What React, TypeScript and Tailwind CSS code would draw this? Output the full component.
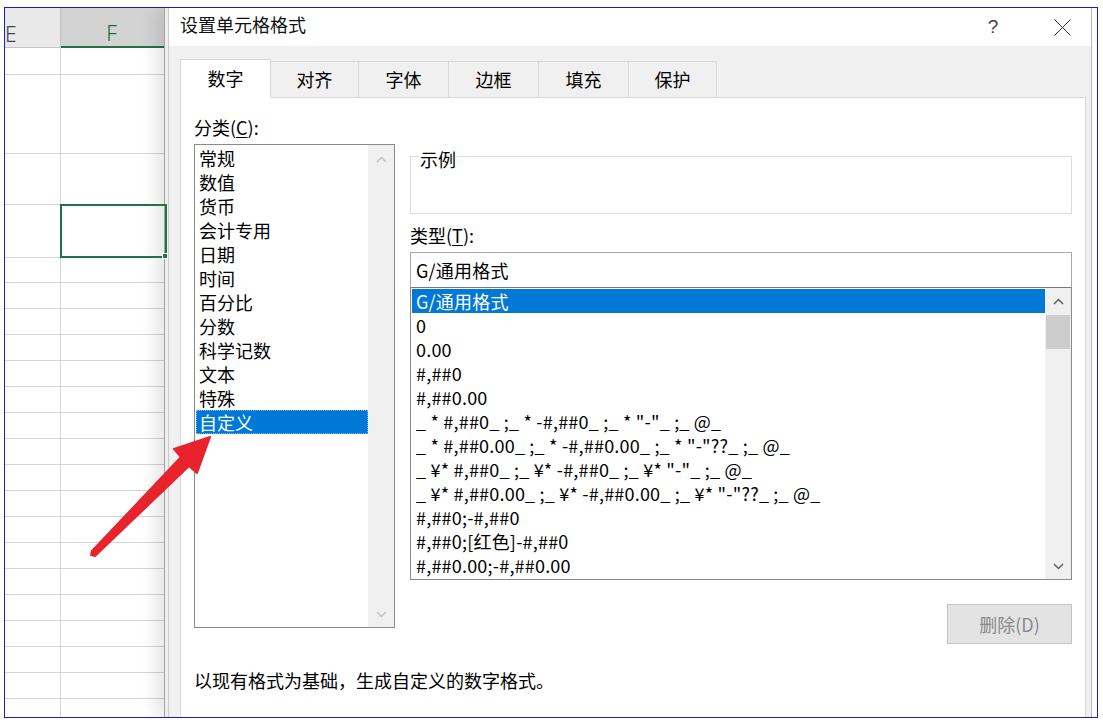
import React from 'react';

const categories = ['常规', '数值', '货币', '会计专用', '日期', '时间', '百分比', '分数', '科学记数', '文本', '特殊', '自定义'];

const formats = [
  'G/通用格式',
  '0',
  '0.00',
  '#,##0',
  '#,##0.00',
  '_ * #,##0_ ;_ * -#,##0_ ;_ * "-"_ ;_ @_ ',
  '_ * #,##0.00_ ;_ * -#,##0.00_ ;_ * "-"??_ ;_ @_ ',
  '_ ¥* #,##0_ ;_ ¥* -#,##0_ ;_ ¥* "-"_ ;_ @_ ',
  '_ ¥* #,##0.00_ ;_ ¥* -#,##0.00_ ;_ ¥* "-"??_ ;_ @_ ',
  '#,##0;-#,##0',
  '#,##0;[红色]-#,##0',
  '#,##0.00;-#,##0.00',
];

// row heights of the sheet behind the dialog (px, incl. bottom line)
const rowHeights = [27, 79, 51, 53, 25, 26, 26, 26, 26, 26, 26, 26, 26, 26, 26, 26, 26, 26, 26, 26, 26, 26];

const tabs = [
  { label: '对齐', w: 'w-[88px]' },
  { label: '字体', w: 'w-[90px]' },
  { label: '边框', w: 'w-[90px]' },
  { label: '填充', w: 'w-[90px]' },
  { label: '保护', w: 'w-[88px]' },
];

const Chevron: React.FC<{ up?: boolean; color: string }> = ({ up, color }) => (
  <svg width="11" height="7" viewBox="0 0 11 7">
    <polyline
      points={up ? '1,6 5.5,1.5 10,6' : '1,1 5.5,5.5 10,1'}
      fill="none"
      stroke={color}
      strokeWidth="1.5"
    />
  </svg>
);

const Sheet: React.FC = () => (
  <div className="w-[159px] shrink-0 flex flex-col bg-white">
    <div className="flex h-[40px] shrink-0 font-['Noto_Sans',sans-serif] font-light text-[21px] leading-[24px]">
      <div className="w-[56px] bg-[#e9e9e9] border-b border-r border-[#c4c4c4] flex items-end pb-[1px] text-[#444]">
        <span>E</span>
      </div>
      <div className="flex-1 bg-[#d3d3d3] border-b-2 border-[#217346] flex items-end justify-center pb-[1px] pr-[2px] text-[#2a6640]">
        F
      </div>
    </div>
    {rowHeights.map((h, i) => (
      <div key={i} className="flex shrink-0 border-b border-[#d4d4d4]" style={{ height: h }}>
        <div className="w-[56px] border-r border-[#d4d4d4]" />
        <div className="flex-1 relative">
          {i === 3 && (
            <div className="absolute -top-[1px] -left-[1px] -right-[3px] -bottom-[1px] border-2 border-[#217346] z-20">
              <div className="absolute -right-[3px] -bottom-[3px] w-[6px] h-[6px] bg-[#217346] border border-white" />
            </div>
          )}
        </div>
      </div>
    ))}
  </div>
);

const Dialog: React.FC = () => (
  <div className="flex shrink-0 relative z-10 shadow-[-10px_0_14px_rgba(0,0,0,0.09)]">
    <div className="w-px bg-[#a3a3a3]" />
    <div className="w-[3px] bg-[#efefef]" />
    <div className="w-px bg-[#cacaca]" />
    <div className="w-[923px] flex flex-col border-r border-[#b8b8b8] text-black">
      <div className="h-[38px] shrink-0 bg-white flex items-start pl-[11px] pt-[4px]">
        <span className="text-[18px] leading-[24px] text-[#111]">设置单元格格式</span>
        <div className="ml-auto flex items-start">
          <div className="w-[46px] h-[30px] flex items-center justify-center text-[19px] text-[#444] font-['Liberation_Sans',sans-serif]">
            ?
          </div>
          <div className="w-[23px]" />
          <div className="w-[46px] h-[30px] flex items-center justify-center mr-[6px]">
            <svg width="17" height="17" viewBox="0 0 17 17">
              <line x1="0.5" y1="0.5" x2="16.5" y2="16.5" stroke="#333" strokeWidth="1" />
              <line x1="16.5" y1="0.5" x2="0.5" y2="16.5" stroke="#333" strokeWidth="1" />
            </svg>
          </div>
        </div>
      </div>

      <div className="flex-1 bg-[#f0f0f0] pl-[11px] pr-[5px] pt-[13px] flex flex-col">
        <div className="flex items-end h-[38px] shrink-0 text-[18px]">
          <div className="h-[39px] w-[91px] -mb-px relative z-10 bg-white border border-b-0 border-[#d9d9d9] flex items-center justify-center pb-px">
            数字
          </div>
          {tabs.map((t) => (
            <div
              key={t.label}
              className={`h-[36px] ${t.w} border-t border-r border-[#d9d9d9] flex items-center justify-center`}
            >
              {t.label}
            </div>
          ))}
        </div>

        <div className="flex-1 bg-white border border-b-0 border-[#d9d9d9] px-[13px] pt-[17px] text-[18px]">
          <div className="flex gap-[15px]">
            <div className="w-[201px] shrink-0 flex flex-col">
              <div className="h-[24px] leading-[24px]">
                分类(<span className="underline underline-offset-2">C</span>):
              </div>
              <div className="mt-[5px] h-[484px] border border-[#8a8a8a] flex">
                <div className="flex-1 pl-px pt-px">
                  {categories.map((c, i) => (
                    <div
                      key={c}
                      className={
                        i === 11
                          ? 'h-[24px] leading-[24px] pl-[3px] bg-[#0078d7] text-white outline outline-1 outline-dotted outline-[#7fb5e6] -outline-offset-1'
                          : 'h-[24px] leading-[24px] pl-[3px]'
                      }
                    >
                      {c}
                    </div>
                  ))}
                </div>
                <div className="w-[26px] bg-[#f0f0f0] flex flex-col justify-between">
                  <div className="h-[28px] flex items-center justify-center">
                    <Chevron up color="#c2c2c2" />
                  </div>
                  <div className="h-[26px] flex items-center justify-center">
                    <Chevron color="#c2c2c2" />
                  </div>
                </div>
              </div>
            </div>

            <div className="flex-1 flex flex-col pt-[41px]">
              <div className="h-[58px] relative border border-[#dcdcdc]">
                <span className="absolute left-[8px] -top-[10px] bg-white px-px leading-[24px]">示例</span>
              </div>
              <div className="mt-[9px] h-[24px] leading-[24px]">
                类型(<span className="underline underline-offset-2">T</span>):
              </div>
              <div className="mt-[5px] h-[36px] border border-[#a9a9a9] border-b-[#7a7a7a] pl-[5px] flex items-center leading-[24px] tracking-[0.2px]">
                G/通用格式
              </div>
              <div className="h-[292px] border border-t-0 border-[#8a8a8a] flex">
                <div className="flex-1 pl-px pt-px overflow-hidden tracking-[0.2px]">
                  {formats.map((f, i) => (
                    <div
                      key={i}
                      className={
                        i === 0
                          ? 'h-[24px] leading-[24px] pl-[4px] whitespace-pre bg-[#0078d7] text-white'
                          : 'h-[24px] leading-[24px] pl-[4px] whitespace-pre'
                      }
                    >
                      {f}
                    </div>
                  ))}
                </div>
                <div className="w-[26px] bg-[#f0f0f0] flex flex-col">
                  <div className="h-[26px] flex items-center justify-center">
                    <Chevron up color="#606060" />
                  </div>
                  <div className="mt-px mx-px h-[34px] bg-[#cdcdcd]" />
                  <div className="flex-1" />
                  <div className="h-[26px] flex items-center justify-center">
                    <Chevron color="#606060" />
                  </div>
                </div>
              </div>
              <button className="mt-[24px] self-end w-[125px] h-[40px] bg-[#e3e3e3] border border-[#c4c4c4] text-[#8a8a8a] text-[18px] leading-[24px]">
                删除(D)
              </button>
            </div>
          </div>
          <div className="mt-[24px] leading-[24px]">以现有格式为基础，生成自定义的数字格式。</div>
        </div>
      </div>
    </div>
  </div>
);

export default function App() {
  return (
    <div className="relative w-[1103px] h-[724px] bg-white overflow-hidden font-['Noto_Sans_CJK_SC','Noto_Sans',sans-serif]">
      <div className="ml-[4px] mt-[7px] w-[1094px] h-[711px] border border-[#1a1ac8] flex overflow-hidden">
        <Sheet />
        <Dialog />
        <div className="flex-1 bg-white" />
      </div>
      <svg
        className="absolute left-0 top-0 pointer-events-none z-30"
        width="1103"
        height="724"
        viewBox="0 0 1103 724"
      >
        <polygon
          points="210,437 174,449 181,457 92,551 91,555 95,556 189,466 197,473"
          fill="#e8232b"
          stroke="#e8232b"
          strokeWidth="2"
          strokeLinejoin="round"
        />
      </svg>
    </div>
  );
}
